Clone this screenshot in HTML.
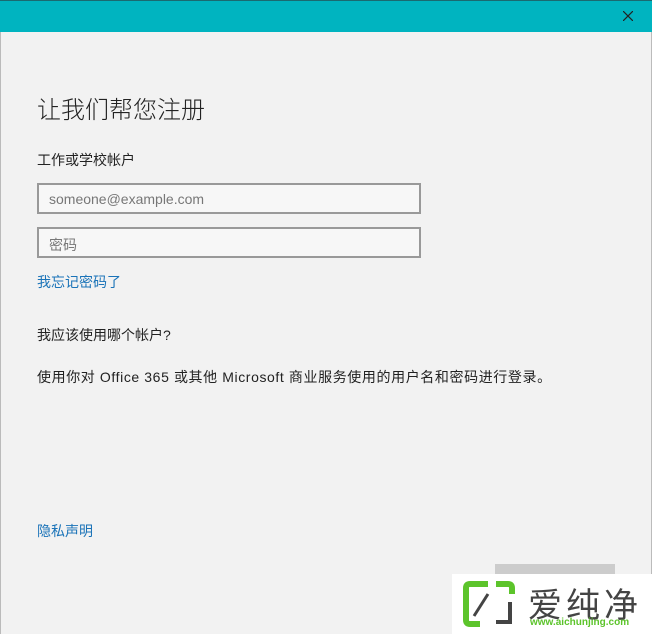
<!DOCTYPE html>
<html><head><meta charset="utf-8"><style>
body{margin:0;width:652px;height:634px;overflow:hidden;background:#f2f2f2;font-family:"Liberation Sans","Noto Sans CJK SC",sans-serif;position:relative}
.t{position:absolute;white-space:nowrap}
.bar{position:absolute;left:0;top:0;width:652px;height:32px;background:#00b4c0;border-top:1px solid #1a6a70;box-sizing:border-box}
.in{position:absolute;left:37px;width:384px;height:31px;border:2px solid #999;box-sizing:border-box;background:#f7f7f7;font-size:14px;color:#777;padding:6px 0 0 10px}
</style></head><body>
<div class="bar"></div>
<svg style="position:absolute;left:623px;top:11px" width="10" height="10"><path d="M0 0L10 10M10 0L0 10" stroke="#222" stroke-width="1.2"/></svg>
<div style="position:absolute;left:0;top:32px;width:1px;height:602px;background:#bbb"></div>
<div style="position:absolute;right:0;top:32px;width:1px;height:602px;background:#bbb"></div>
<div class="t" style="left:37px;top:90px;font-size:24px;color:#222;font-weight:300">让我们帮您注册</div>
<div class="t" style="left:37px;top:150px;font-size:14px;color:#222">工作或学校帐户</div>
<div class="in" style="top:183px">someone@example.com</div>
<div class="in" style="top:227px">密码</div>
<div class="t" style="left:37px;top:272px;font-size:14px;color:#1a73b8">我忘记密码了</div>
<div class="t" style="left:37px;top:325px;font-size:14px;color:#222">我应该使用哪个帐户?</div>
<div class="t" style="left:37px;top:367px;font-size:14px;color:#222;letter-spacing:0.6px">使用你对 Office 365 或其他 Microsoft 商业服务使用的用户名和密码进行登录。</div>
<div class="t" style="left:37px;top:521px;font-size:14px;color:#1a73b8">隐私声明</div>
<div style="position:absolute;left:495px;top:564px;width:120px;height:20px;background:#ccc"></div>
<div style="position:absolute;left:452px;top:574px;width:200px;height:60px;background:#fff"></div>
<svg style="position:absolute;left:462px;top:580px" width="54" height="48"><path d="M26 4H8Q4 4 4 8V40Q4 44 8 44H18" stroke="#5cc42b" stroke-width="6" fill="none"/><path d="M34 4H46Q50 4 50 8V14" stroke="#5cc42b" stroke-width="6" fill="none"/><path d="M12 36L26 14" stroke="#444" stroke-width="3"/><path d="M48 22V42H34" stroke="#444" stroke-width="4" fill="none"/></svg>
<div class="t" style="left:528px;top:578px;font-size:34px;color:#444;letter-spacing:4px">爱纯净</div>
<div class="t" style="left:530px;top:617px;font-size:10px;color:#5cc42b;font-weight:bold">www.aichunjing.com</div>
</body></html>
